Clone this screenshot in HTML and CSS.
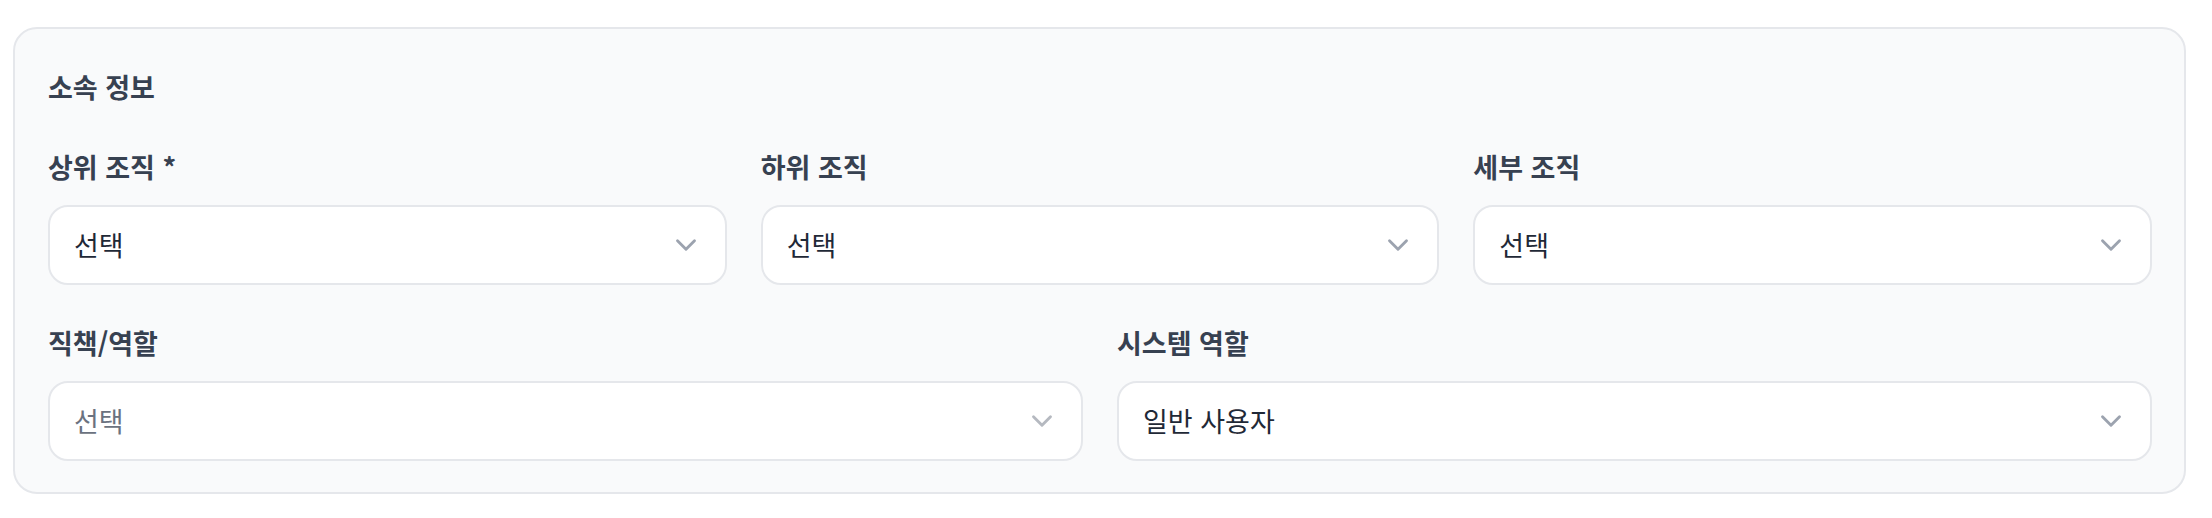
FILE: index.html
```html
<!DOCTYPE html>
<html lang="ko">
<head>
<meta charset="utf-8">
<link rel="stylesheet" href="styles.css">
</head>
<body>
<div class="wrap">
  <section class="card">
    <h3 class="title">소속 정보</h3>
    <div class="row row-3">
      <div class="field">
        <label class="label">상위 조직 *</label>
        <div class="select"><span class="value">선택</span><svg class="chev" viewBox="0 0 24 24"><path d="m6 9 6 6 6-6"/></svg></div>
      </div>
      <div class="field">
        <label class="label">하위 조직</label>
        <div class="select"><span class="value">선택</span><svg class="chev" viewBox="0 0 24 24"><path d="m6 9 6 6 6-6"/></svg></div>
      </div>
      <div class="field">
        <label class="label">세부 조직</label>
        <div class="select"><span class="value">선택</span><svg class="chev" viewBox="0 0 24 24"><path d="m6 9 6 6 6-6"/></svg></div>
      </div>
    </div>
    <div class="row row-2">
      <div class="field">
        <label class="label">직책/역할</label>
        <div class="select"><span class="value placeholder">선택</span><svg class="chev light" viewBox="0 0 24 24"><path d="m6 9 6 6 6-6"/></svg></div>
      </div>
      <div class="field">
        <label class="label">시스템 역할</label>
        <div class="select"><span class="value">일반 사용자</span><svg class="chev" viewBox="0 0 24 24"><path d="m6 9 6 6 6-6"/></svg></div>
      </div>
    </div>
  </section>
</div>
</body>
</html>
```
FILE: styles.css
```css
* { box-sizing: border-box; }
html, body { margin: 0; padding: 0; background: #ffffff; }
body {
  font-family: "Noto Sans CJK KR", "Noto Sans", sans-serif;
  color: #374151;
}
.wrap {
  padding: 27px 26px 0 13px;
}
.card {
  background: #f9fafb;
  border: 2px solid #e5e7eb;
  border-radius: 24px;
  padding: 43px 32px 31px 33px;
}
.title {
  margin: 0 0 48px 0;
  font-size: 27px;
  line-height: 30px;
  font-weight: 600;
  color: #374151;
}
.row {
  display: grid;
  column-gap: 34px;
}
.row-3 { grid-template-columns: 1fr 1fr 1fr; margin-bottom: 41px; }
.row-2 { grid-template-columns: 1fr 1fr; }
.field { display: flex; flex-direction: column; min-width: 0; }
.label {
  font-size: 27px;
  line-height: 34px;
  font-weight: 600;
  color: #374151;
  margin-bottom: 21px;
}
.select {
  height: 80px;
  background: #ffffff;
  border: 2px solid #e5e7eb;
  border-radius: 20px;
  display: flex;
  align-items: center;
  justify-content: space-between;
  padding: 0 22px 0 24px;
}
.value {
  font-size: 27px;
  line-height: 34px;
  color: #1f2937;
}
.value.placeholder { color: #6b7280; }
.chev {
  width: 34px;
  height: 34px;
  fill: none;
  stroke: #9ca3af;
  stroke-width: 2;
  stroke-linecap: round;
  stroke-linejoin: round;
}
.chev.light { stroke: #b5b9c0; }
```
